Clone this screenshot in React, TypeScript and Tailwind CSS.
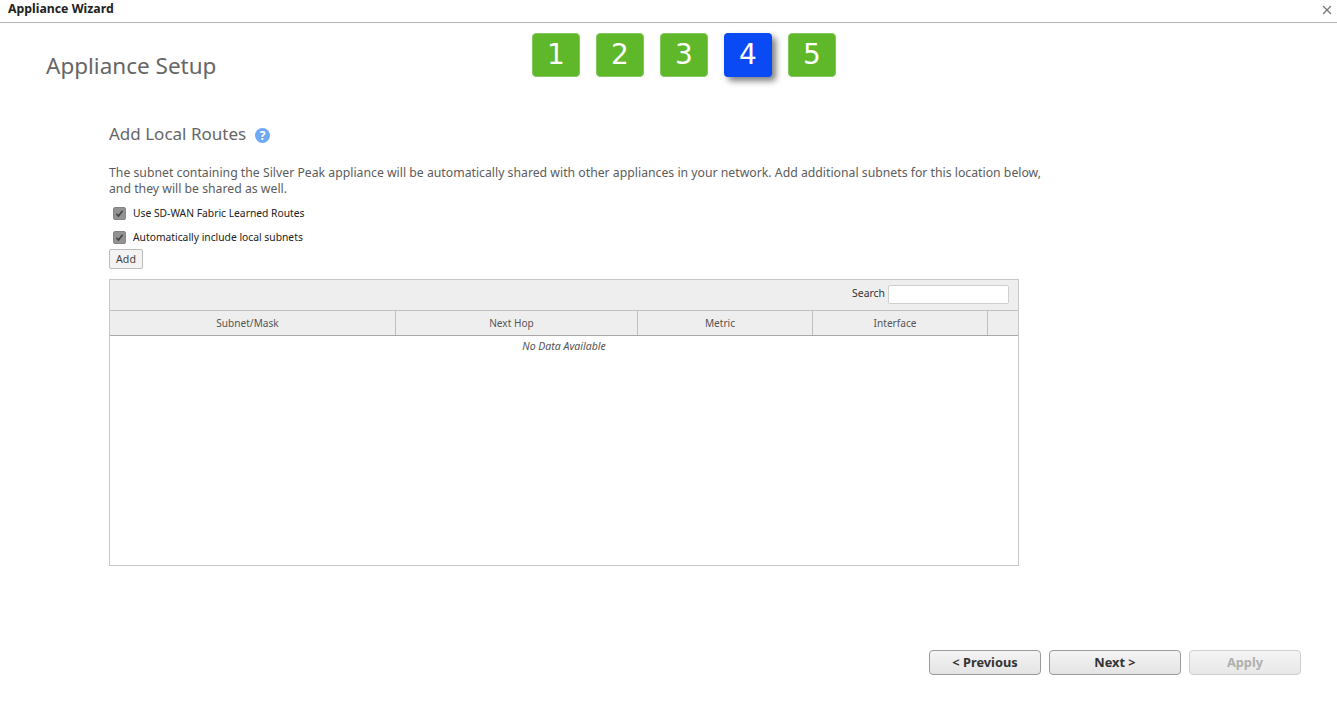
import { X } from "lucide-react";

const STEPS = [1, 2, 3, 4, 5];
const COLUMNS = [
  { label: "Subnet/Mask", width: "w-[286px]" },
  { label: "Next Hop", width: "w-[242px]" },
  { label: "Metric", width: "w-[175px]" },
  { label: "Interface", width: "w-[175px]" },
  { label: "", width: "flex-1" },
];

function CheckRow({ label }: { label: string }) {
  return (
    <label className="flex items-center h-[24px] pl-[4px] text-[10.3px] text-[#222]">
      <span className="w-[13px] h-[13px] rounded-[2px] bg-[#929292] border border-[#858585] flex items-center justify-center">
        <svg width="11" height="11" viewBox="0 0 11 11">
          <path d="M2.4 5.8 L4.5 8 L8.6 2.8" fill="none" stroke="#444" strokeWidth="1.6" />
        </svg>
      </span>
      <span className="ml-[7px] pt-[2px]">{label}</span>
    </label>
  );
}

export default function App() {
  return (
    <div className="w-[1337px] h-[708px] bg-white overflow-hidden flex flex-col font-['Noto_Sans','DejaVu_Sans',sans-serif] text-[#666]">
      <div className="h-[23px] shrink-0 border-b border-[#b4b4b4] flex items-center justify-between pl-[8px] pr-[3px]">
        <span className="text-[12.3px] font-bold text-[#222] leading-none -mt-[4px]">Appliance Wizard</span>
        <X size={14} strokeWidth={2.4} className="text-[#777] -mt-[2px]" />
      </div>

      <div className="flex h-[54px] mt-[10px] shrink-0">
        <h1 className="w-[486px] ml-[46px] pt-[15px] text-[22.5px] leading-[36px] text-[#666] font-normal">
          Appliance Setup
        </h1>
        <div className="flex gap-[16px]">
          {STEPS.map((n) => (
            <div
              key={n}
              className={
                n === 4
                  ? "w-[48px] h-[44px] rounded-[4px] bg-[#0a4af5] text-white text-[28px] font-['DejaVu_Sans',sans-serif] flex items-center justify-center shadow-[4px_4px_6px_rgba(0,0,0,0.5)]"
                  : "w-[48px] h-[44px] rounded-[4px] bg-[#5fb82a] border border-[#86c95c] text-white text-[28px] font-['DejaVu_Sans',sans-serif] flex items-center justify-center"
              }
            >
              {n}
            </div>
          ))}
        </div>
      </div>

      <div className="ml-[109px] mt-[34px] flex-1 flex flex-col">
        <div className="flex items-center h-[26px]">
          <h2 className="text-[17px] font-normal text-[#666]">Add Local Routes</h2>
          <span className="ml-[9px] mt-[3px] w-[15px] h-[15px] rounded-full bg-[#6fa9f5] text-white text-[12px] font-bold flex items-center justify-center">
            ?
          </span>
        </div>
        <p className="mt-[18px] w-[940px] text-[12.25px] leading-[16px] text-[#5c5c5c]">
          The subnet containing the Silver Peak appliance will be automatically shared with other appliances in your
          network. Add additional subnets for this location below, and they will be shared as well.
        </p>
        <div className="mt-[4px]">
          <CheckRow label="Use SD-WAN Fabric Learned Routes" />
          <CheckRow label="Automatically include local subnets" />
        </div>
        <button className="w-[34px] h-[20px] rounded-[2px] border border-[#bdbdbd] bg-[#f3f3f3] text-[10.6px] text-[#444] pt-[2px] flex items-center justify-center">
          Add
        </button>

        <div className="mt-[10px] w-[910px] h-[287px] border border-[#c8c8c8]">
          <div className="h-[31px] bg-[#eeeeee] border-b border-[#c0c0c0] flex items-center justify-end pr-[9px]">
            <span className="text-[10.4px] text-[#333] mr-[3px] -mt-[2px]">Search</span>
            <input className="w-[121px] h-[19px] -mt-[1px] bg-white border border-[#cfcfcf] rounded-[2px]" />
          </div>
          <div className="h-[25px] bg-[#eeeeee] border-b border-[#a8a8a8] flex">
            {COLUMNS.map((c) => (
              <div
                key={c.label || "actions"}
                className={`${c.width} pr-[10px] pt-[2px] border-r border-[#c0c0c0] last:border-r-0 text-[10.1px] text-[#555] flex items-center justify-center`}
              >
                {c.label}
              </div>
            ))}
          </div>
          <div className="text-center italic text-[10.5px] text-[#555] pt-[3px]">No Data Available</div>
        </div>
      </div>

      <div className="flex justify-end gap-[8px] pr-[36px] mb-[33px] shrink-0">
        <button className="w-[112px] h-[25px] rounded-[4px] border border-[#9a9a9a] bg-gradient-to-b from-[#f4f4f4] to-[#e4e4e4] text-[12.8px] font-bold text-[#333]">
          &lt; Previous
        </button>
        <button className="w-[132px] h-[25px] rounded-[4px] border border-[#9a9a9a] bg-gradient-to-b from-[#f4f4f4] to-[#e4e4e4] text-[12.8px] font-bold text-[#333]">
          Next &gt;
        </button>
        <button className="w-[112px] h-[25px] rounded-[4px] border border-[#cfcfcf] bg-gradient-to-b from-[#f4f4f4] to-[#e8e8e8] text-[12.8px] font-bold text-[#b0b0b0]">
          Apply
        </button>
      </div>
    </div>
  );
}
